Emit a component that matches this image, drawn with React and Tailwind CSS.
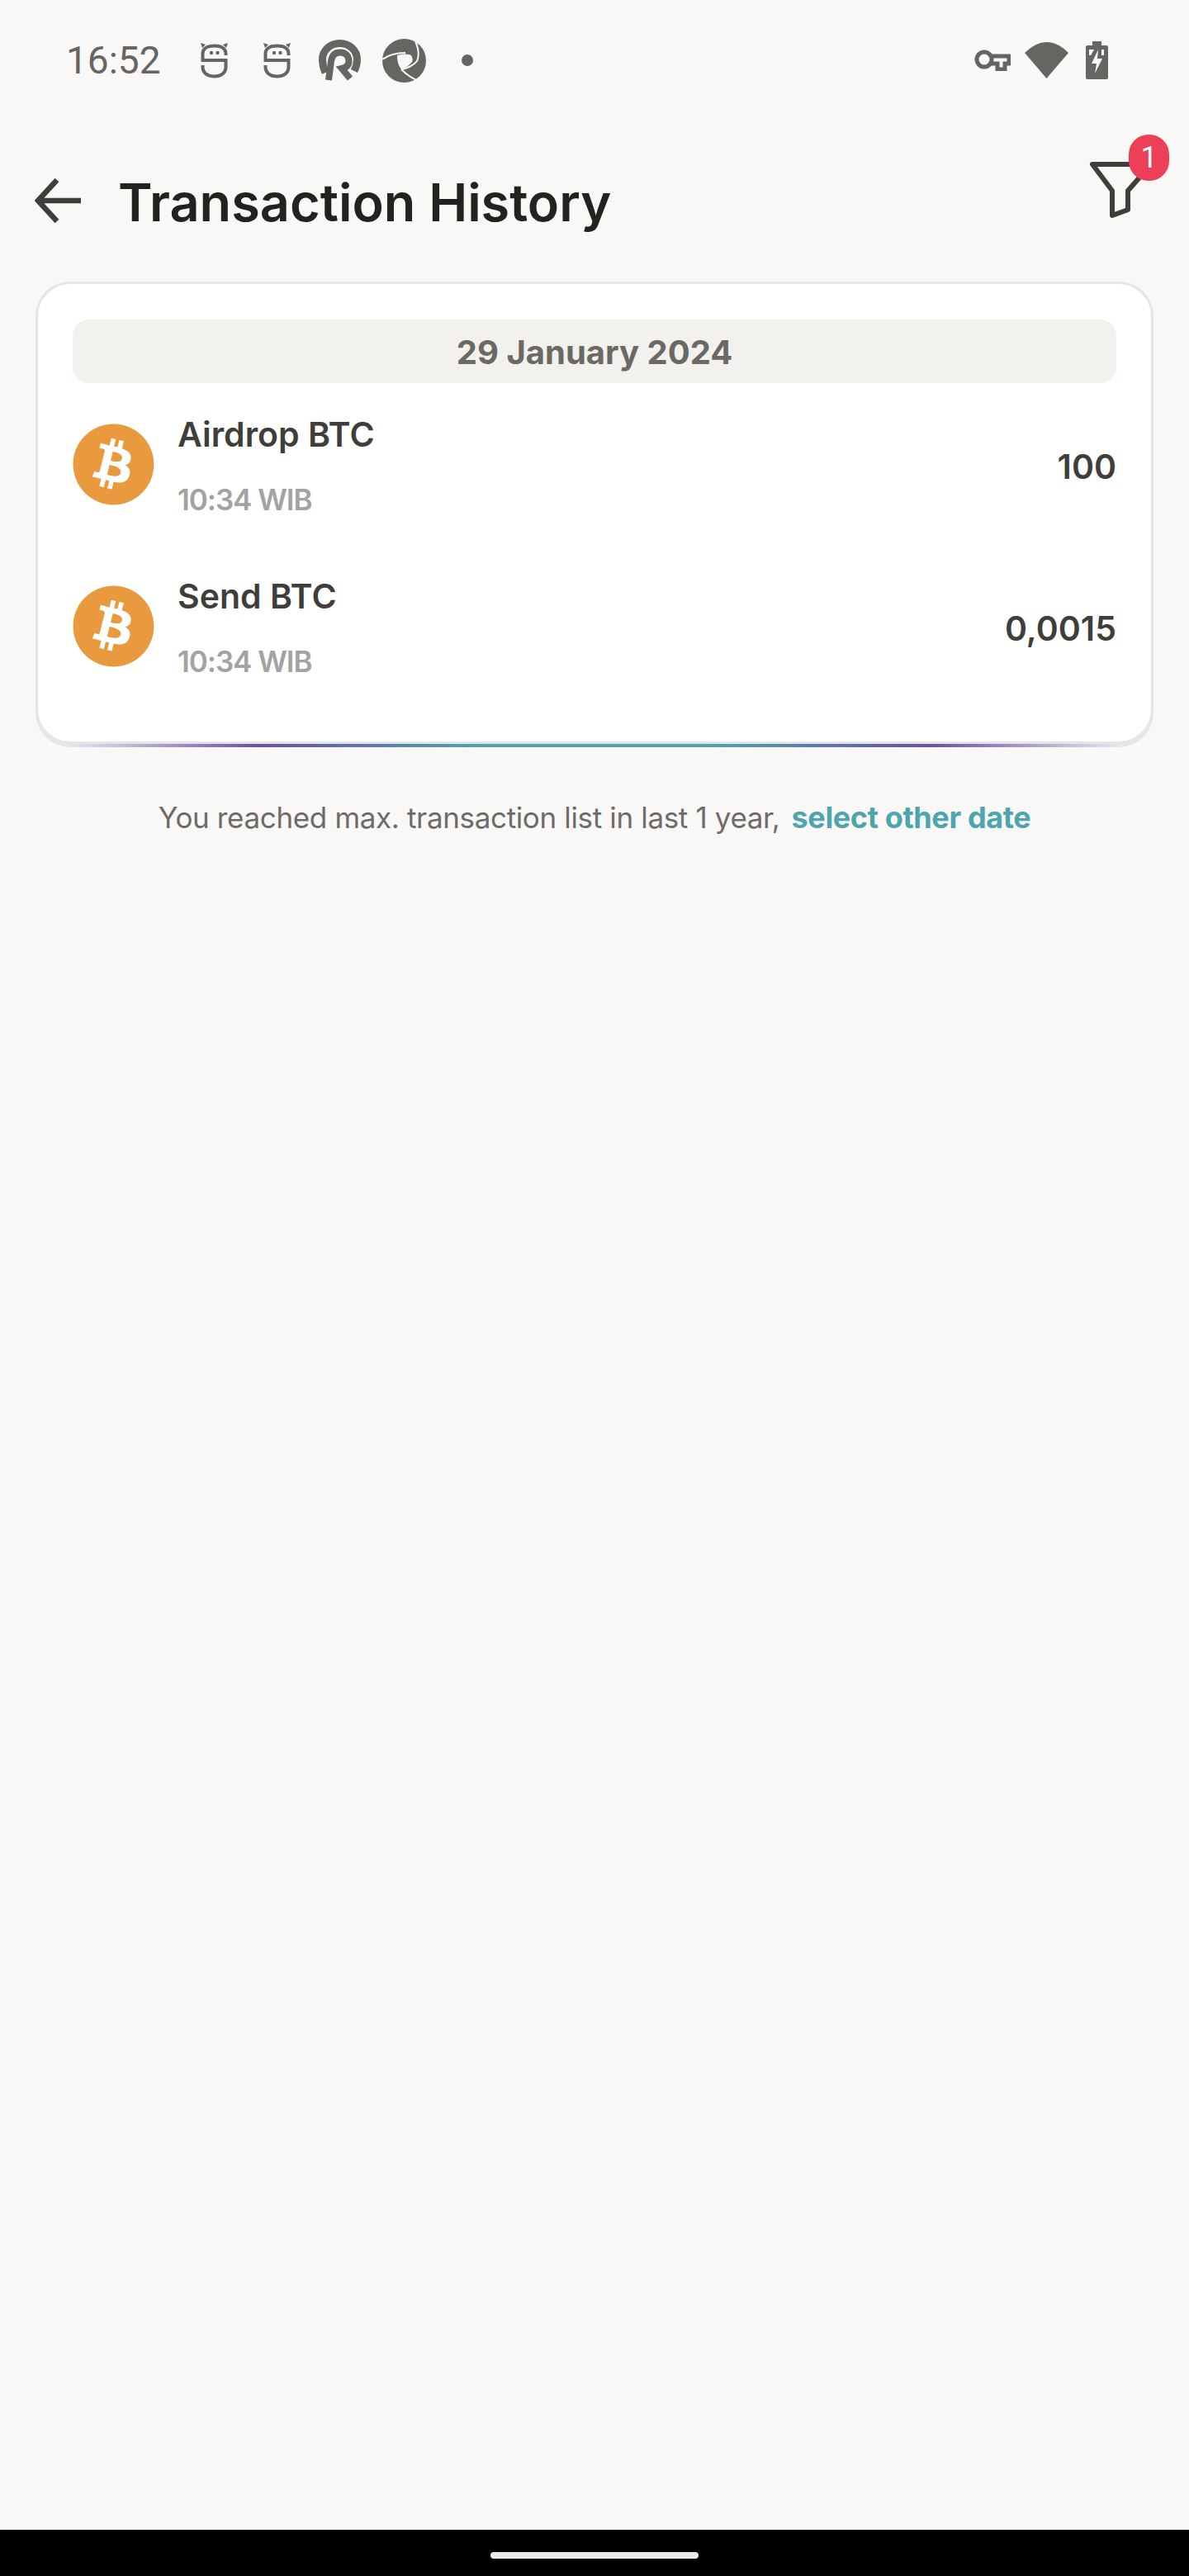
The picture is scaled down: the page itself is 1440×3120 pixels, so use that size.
import { FaBitcoin } from "react-icons/fa";

const transactions = [
  { name: "Airdrop BTC", time: "10:34 WIB", amount: "100" },
  { name: "Send BTC", time: "10:34 WIB", amount: "0,0015" },
];

function BotIcon() {
  return (
    <svg width="33" height="43" viewBox="0 0 33 43" fill="none" stroke="#666562" strokeWidth="4">
      <path d="M30.5 15V13C30.5 6 24 3.5 16.5 3.5S2.5 6 2.5 13V21H30.5V29C30.5 36 25 40.5 16.5 40.5S2.5 36 2.5 29V27" />
      <path d="M0 0L6 2L2 6ZM33 0L27 2L31 6Z" fill="#666562" stroke="none" />
      <circle cx="13" cy="12" r="2.2" fill="#666562" stroke="none" />
      <circle cx="20.5" cy="12" r="2.2" fill="#666562" stroke="none" />
    </svg>
  );
}

function StatusBar() {
  return (
    <div className="flex h-[146px] items-center justify-between pl-[80px] pr-[98px]">
      <div className="flex items-center">
        <span className="w-[111px] text-[46px] leading-[54px] text-[#666562] font-['Roboto',sans-serif]">16:52</span>
        <div className="ml-[52px] flex items-center gap-[43px]">
          <BotIcon />
          <BotIcon />
        </div>
        <svg className="ml-[34px]" width="51" height="50" viewBox="0 0 51 50" fill="none" stroke="#666562">
          <path d="M8 40C5 33 4.500 27 4.500 24C4.500 13 14 4.500 25.500 4.500C37 4.500 46.500 13 46.500 24C46.500 29 45 34 43 38" strokeWidth="9" />
          <path d="M12 49L15 26C16 19 20 15.500 26 15.500C33 15.500 36.500 20 36.500 26C36.500 31 33 34 28 35L38 47" strokeWidth="8" />
        </svg>
        <svg className="ml-[26px]" width="53" height="53" viewBox="0 0 53 53" fill="#666562">
          <circle cx="26.500" cy="26.500" r="26.500" />
          <path d="M18 20C24 18 30 18 35 20C37 24 37 26 36 28C32 33 28 35 23 37C19 32 18 26 18 20Z" fill="#faf9f7" />
          <path d="M0 25C8 19 18 17 28 17M40 3C44 12 45 20 42 27C38 32 30 36 23 37M23 37C29 43 36 48 44 51" fill="none" stroke="#faf9f7" strokeWidth="2" />
        </svg>
        <span className="ml-[43px] h-[14px] w-[14px] rounded-full bg-[#666562]" />
      </div>
      <div className="flex items-center">
        <svg width="44" height="26" viewBox="0 0 44 26" fill="none" stroke="#666562" strokeWidth="5">
          <circle cx="12" cy="12" r="9" />
          <path d="M20 8H42V17H37V24H28V17H20" />
        </svg>
        <svg className="ml-[17px]" width="53" height="44" viewBox="0 0 53 44" fill="#666562">
          <path d="M26.500 44L0 13Q26.500 -13 53 13Z" />
        </svg>
        <svg className="ml-[21px]" width="27" height="46" viewBox="0 0 27 46" fill="#666562">
          <path d="M8 0H19V5H25Q27 5 27 7V44Q27 46 25 46H2Q0 46 0 44V7Q0 5 2 5H8Z" />
          <path d="M15 10L7 27H13L11 39L20 21H14Z" fill="#faf9f7" />
          <path d="M4 10H10L6 17H4ZM19 10H22V17H19Z" fill="#faf9f7" />
        </svg>
      </div>
    </div>
  );
}

function Header() {
  return (
    <div className="mt-[49px] flex h-[100px] items-center pl-[42px] pr-[42px]">
      <svg className="-mt-[4px]" width="56" height="56" viewBox="0 0 56 56" fill="none" stroke="#3f3e3b" strokeWidth="6.500">
        <path d="M56 28H4M27 3L4 28L27 53" />
      </svg>
      <h1 className="ml-[45px] flex-1 text-[63px] font-semibold leading-[80px] text-[#23221f]">
        Transaction History
      </h1>
      <div className="relative self-start">
        <svg width="80" height="70" viewBox="0 0 80 70" fill="none" stroke="#3f3e3b" strokeWidth="6" strokeLinejoin="round">
          <path d="M5 4H76L48 36V59L29 66V36Z" />
        </svg>
        <span className="absolute left-[49px] top-[-32px] flex h-[56px] w-[49px] items-center justify-center rounded-[24px] bg-[#ec4058] text-[36px] text-white font-['Roboto',sans-serif]">
          1
        </span>
      </div>
    </div>
  );
}

function TransactionRow({ name, time, amount }) {
  return (
    <div className="flex h-[196px] items-center">
      <div className="flex h-[98px] w-[98px] shrink-0 items-center justify-center">
        <FaBitcoin size={101} className="shrink-0 text-[#e99a3e]" />
      </div>
      <div className="ml-[29px] flex-1">
        <div className="text-[41px] font-semibold leading-[52px] text-[#3f3e3b]">{name}</div>
        <div className="mt-[33px] text-[35px] font-semibold leading-[40px] tracking-[-0.03em] text-[#a3a3a1]">{time}</div>
      </div>
      <div className="pt-[7px] text-[41px] font-semibold text-[#3f3e3b]">{amount}</div>
    </div>
  );
}

export default function App() {
  return (
    <div className="flex h-[3120px] flex-col bg-[#f9f8f6] font-['Inter',sans-serif]">
      <StatusBar />
      <Header />
      <div className="mx-[43px] mt-[46px] rounded-[42px] bg-[linear-gradient(to_right,#e8e5ee_3%,#6a4fa8_20%,#4da6ad_40%,#4da6ad_60%,#6a4fa8_80%,#e8e5ee_97%)] pb-[4px]">
        <div className="h-[560px] rounded-[42px] border-[3px] border-[#e6e6e6] bg-white px-[42px] pt-[43px]">
          <div className="flex h-[77px] items-center justify-center rounded-[20px] bg-[#f2f1ee] pt-[3px] text-[40px] font-bold text-[#6b6963]">
            29 January 2024
          </div>
          {transactions.map((t) => (
            <TransactionRow key={t.name} {...t} />
          ))}
        </div>
      </div>
      <div className="mt-[63px] flex justify-center gap-[14px] leading-[44px]">
        <span className="text-[35px] tracking-[-0.01em] text-[#6d6c69]">You reached max. transaction list in last 1 year,</span>
        <span className="text-[36px] font-bold tracking-[-0.01em] text-[#4da6ad]">select other date</span>
      </div>
      <div className="mt-auto flex h-[56px] justify-center bg-black pt-[27px]">
        <div className="h-[8px] w-[252px] rounded-full bg-[#e8e8e8]" />
      </div>
    </div>
  );
}
